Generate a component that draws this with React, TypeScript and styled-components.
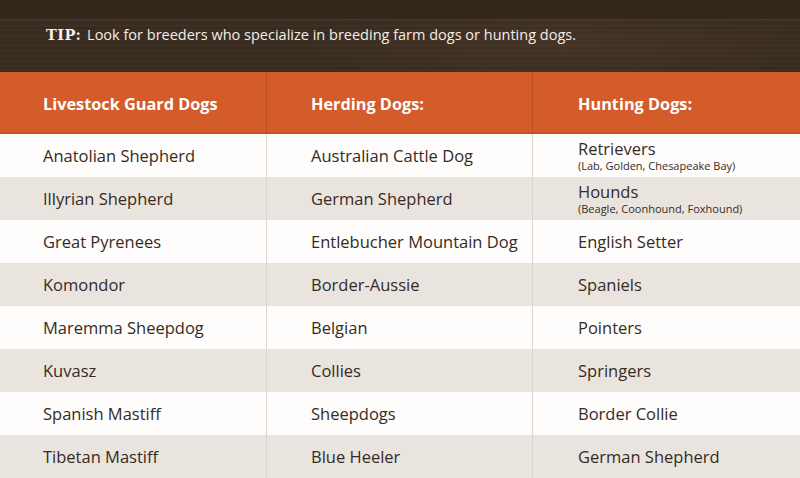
import React from "react"
import styled, { createGlobalStyle } from "styled-components"

type Cell = { name: string; note?: string }

const columns: { title: string; items: Cell[] }[] = [
  {
    title: "Livestock Guard Dogs",
    items: [
      { name: "Anatolian Shepherd" },
      { name: "Illyrian Shepherd" },
      { name: "Great Pyrenees" },
      { name: "Komondor" },
      { name: "Maremma Sheepdog" },
      { name: "Kuvasz" },
      { name: "Spanish Mastiff" },
      { name: "Tibetan Mastiff" },
    ],
  },
  {
    title: "Herding Dogs:",
    items: [
      { name: "Australian Cattle Dog" },
      { name: "German Shepherd" },
      { name: "Entlebucher Mountain Dog" },
      { name: "Border-Aussie" },
      { name: "Belgian" },
      { name: "Collies" },
      { name: "Sheepdogs" },
      { name: "Blue Heeler" },
    ],
  },
  {
    title: "Hunting Dogs:",
    items: [
      { name: "Retrievers", note: "(Lab, Golden, Chesapeake Bay)" },
      { name: "Hounds", note: "(Beagle, Coonhound, Foxhound)" },
      { name: "English Setter" },
      { name: "Spaniels" },
      { name: "Pointers" },
      { name: "Springers" },
      { name: "Border Collie" },
      { name: "German Shepherd" },
    ],
  },
]

const rowCount = 8
// left inset of the text in each column
const insets = [43, 44, 45]

const GlobalStyle = createGlobalStyle`
  html, body {
    margin: 0;
    padding: 0;
    background: #ffffff;
  }
  body {
    font-family: "Open Sans", Lato, sans-serif;
  }
`

export default function App() {
  const rows = Array.from({ length: rowCount }, (_, i) => i)
  return (
    <Page>
      <GlobalStyle />
      <TipBar>
        <TipTop />
        <TipText>
          <TipLabel>TIP:</TipLabel> Look for breeders who specialize in breeding farm dogs or hunting dogs.
        </TipText>
      </TipBar>
      <Table>
        {columns.map((col, c) => (
          <HeadCell key={col.title} $last={c === columns.length - 1} $inset={insets[c]}>
            {col.title}
          </HeadCell>
        ))}
        {rows.map(r =>
          columns.map((col, c) => {
            const item = col.items[r]
            return (
              <BodyCell
                key={`${r}-${c}`}
                $shaded={r % 2 === 1}
                $last={c === columns.length - 1}
                $inset={insets[c]}
              >
                <Name>{item.name}</Name>
                {item.note && <Note>{item.note}</Note>}
              </BodyCell>
            )
          })
        )}
      </Table>
    </Page>
  )
}

const Page = styled.div`
  width: 800px;
  height: 478px;
  overflow: hidden;
  display: flex;
  flex-direction: column;
`
const TipBar = styled.div`
  height: 73px;
  display: flex;
  flex-direction: column;
  background-color: #3a2c21;
  background-image:
    repeating-linear-gradient(
      180deg,
      rgba(255, 255, 255, 0.02) 0px,
      rgba(255, 255, 255, 0.02) 1px,
      rgba(0, 0, 0, 0.04) 2px,
      rgba(0, 0, 0, 0) 5px
    ),
    radial-gradient(ellipse 260px 40px at 560px 45px, rgba(120, 90, 60, 0.18), rgba(0, 0, 0, 0));
`
const TipTop = styled.div`
  height: 19px;
  background: #33261b;
  border-bottom: 1px solid #4a3a2c;
  flex-shrink: 0;
`
const TipText = styled.div`
  padding: 5px 0 0 46px;
  color: #f4efe9;
  font-size: 14.5px;
`
const TipLabel = styled.span`
  font-family: "DejaVu Serif", "Liberation Serif", serif;
  font-weight: 800;
  font-size: 14.5px;
  letter-spacing: 0.5px;
  margin-right: 2px;
`
const Table = styled.div`
  display: grid;
  grid-template-columns: 267px 266px 267px;
  grid-template-rows: 62px repeat(${rowCount}, 43px);
`
const HeadCell = styled.div<{ $last: boolean; $inset: number }>`
  background: #d45b2a;
  border-bottom: 2px solid #c95024;
  border-right: ${p => (p.$last ? "none" : "1px solid #bf4f25")};
  display: flex;
  align-items: center;
  padding: 3px 0 0 ${p => p.$inset}px;
  color: #ffffff;
  font-weight: 700;
  font-size: 16.3px;
`
const BodyCell = styled.div<{ $shaded: boolean; $last: boolean; $inset: number }>`
  background: ${p => (p.$shaded ? "#eae4df" : "#fefdfc")};
  border-right: ${p => (p.$last ? "none" : "1.5px solid #dcd6d1")};
  display: flex;
  flex-direction: column;
  justify-content: center;
  padding: 0 0 0 ${p => p.$inset}px;
  color: #352b24;
`
const Name = styled.div`
  font-size: 16.5px;
  line-height: 20px;
`
const Note = styled.div`
  font-size: 11px;
  line-height: 13px;
`
